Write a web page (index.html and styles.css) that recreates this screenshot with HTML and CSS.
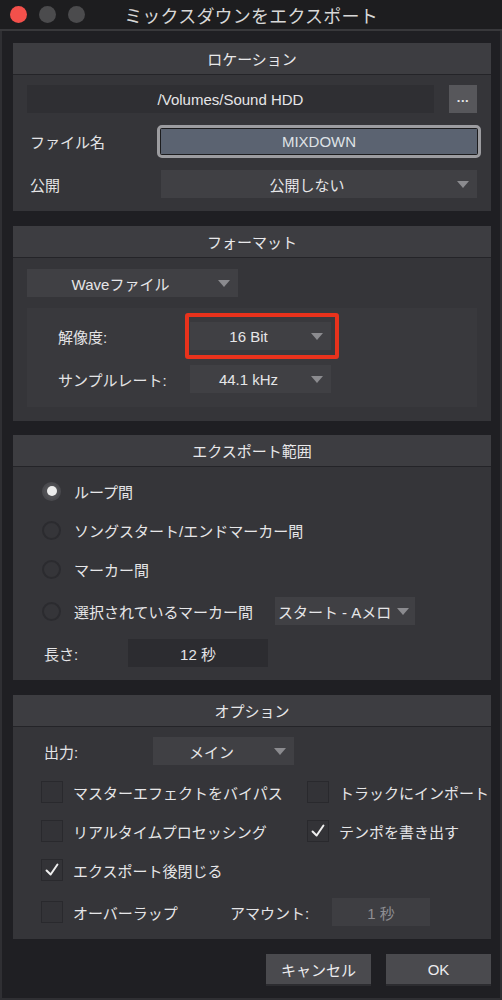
FILE: index.html
```html
<!DOCTYPE html>
<html lang="ja">
<head>
<meta charset="utf-8">
<title>ミックスダウンをエクスポート</title>
<link rel="stylesheet" href="styles.css">
</head>
<body>
<div class="titlebar">
  <div class="lights">
    <span class="light red"></span>
    <span class="light"></span>
    <span class="light"></span>
  </div>
  <div class="title">ミックスダウンをエクスポート</div>
  <div></div>
</div>
<div class="window">
  <section class="panel">
    <div class="panel-head">ロケーション</div>
    <div class="panel-body loc">
      <div class="row">
        <div class="path">/Volumes/Sound HDD</div>
        <div class="browse">...</div>
      </div>
      <div class="row">
        <div class="label loc-label">ファイル名</div>
        <div class="input"><div class="input-inner">MIXDOWN</div></div>
      </div>
      <div class="row">
        <div class="label loc-label">公開</div>
        <div class="dd grow"><span class="dd-text">公開しない</span><span class="arrow"></span></div>
      </div>
    </div>
  </section>

  <section class="panel">
    <div class="panel-head">フォーマット</div>
    <div class="panel-body fmt">
      <div class="dd wave"><span class="dd-text">Waveファイル</span><span class="arrow"></span></div>
      <div class="subpanel">
        <div class="row">
          <div class="label fmt-label">解像度:</div>
          <div class="hl">
            <div class="dd small"><span class="dd-text">16 Bit</span><span class="arrow"></span></div>
          </div>
        </div>
        <div class="row">
          <div class="label fmt-label">サンプルレート:</div>
          <div class="dd small"><span class="dd-text">44.1 kHz</span><span class="arrow"></span></div>
        </div>
      </div>
    </div>
  </section>

  <section class="panel">
    <div class="panel-head">エクスポート範囲</div>
    <div class="panel-body range">
      <div class="row"><span class="radio on"></span><span class="opt">ループ間</span></div>
      <div class="row"><span class="radio"></span><span class="opt">ソングスタート/エンドマーカー間</span></div>
      <div class="row"><span class="radio"></span><span class="opt">マーカー間</span></div>
      <div class="row more"><span class="radio"></span><span class="opt">選択されているマーカー間</span>
        <div class="dd marker"><span class="dd-text left">スタート - Aメロ</span><span class="arrow"></span></div>
      </div>
      <div class="row more len">
        <div class="label len-label">長さ:</div>
        <div class="field">12 秒</div>
      </div>
    </div>
  </section>

  <section class="panel">
    <div class="panel-head">オプション</div>
    <div class="panel-body opts">
      <div class="row out">
        <div class="label out-label">出力:</div>
        <div class="dd small"><span class="dd-text">メイン</span><span class="arrow"></span></div>
      </div>
      <div class="row first-check">
        <div class="check-item col1"><span class="cb"></span><span class="opt">マスターエフェクトをバイパス</span></div>
        <div class="check-item"><span class="cb"></span><span class="opt">トラックにインポート</span></div>
      </div>
      <div class="row">
        <div class="check-item col1"><span class="cb"></span><span class="opt">リアルタイムプロセッシング</span></div>
        <div class="check-item"><span class="cb"><svg viewBox="0 0 22 22"><polyline points="5,11.5 9.5,16 17,5" /></svg></span><span class="opt">テンポを書き出す</span></div>
      </div>
      <div class="row">
        <div class="check-item col1"><span class="cb"><svg viewBox="0 0 22 22"><polyline points="5,11.5 9.5,16 17,5" /></svg></span><span class="opt">エクスポート後閉じる</span></div>
      </div>
      <div class="row more">
        <div class="check-item overlap"><span class="cb"></span><span class="opt">オーバーラップ</span></div>
        <div class="label amt-label">アマウント:</div>
        <div class="field amount">1 秒</div>
      </div>
    </div>
  </section>

  <div class="buttons">
    <div class="btn">キャンセル</div>
    <div class="btn">OK</div>
  </div>
</div>
</body>
</html>
```
FILE: styles.css
```css
* { box-sizing: border-box; }
html, body { margin: 0; }
body {
  width: 502px;
  height: 1000px;
  overflow: hidden;
  background: #1f1f23;
  font: 15px "Liberation Sans", "Noto Sans CJK JP", sans-serif;
  color: #e6e6e8;
}
.titlebar {
  height: 31px;
  background: #1d1d1f;
  border-bottom: 2px solid #38383b;
  display: grid;
  grid-template-columns: 1fr auto 1fr;
  align-items: center;
}
.lights { display: flex; gap: 12px; padding-left: 10px; }
.light { width: 17px; height: 17px; border-radius: 50%; background: #4b4b4d; }
.light.red { background: #f3504b; }
.title { font-size: 18px; color: #d8d8d8; letter-spacing: 0.2px; }

.window {
  height: 969px;
  border: 2px solid #2f2f33;
  border-top: none;
  padding: 12px 9px 0 11px;
  display: flex;
  flex-direction: column;
}
.panel { background: #353539; margin-bottom: 15px; }
.panel:nth-of-type(2) { margin-bottom: 14px; }
.panel-head {
  height: 32px;
  background: #3d3d41;
  border-bottom: 1px solid #242428;
  display: flex;
  align-items: center;
  justify-content: center;
  color: #e8e8ea;
}
.row { display: flex; align-items: center; height: 28px; }
.label { flex: none; color: #e4e4e6; }

/* Location */
.loc { padding: 10px 14px 13px 14px; display: flex; flex-direction: column; gap: 12px; }
.loc .row:nth-child(2) { height: 33px; }
.path {
  width: 407px; height: 28px; background: #2f2f33;
  display: flex; align-items: center; justify-content: center;
}
.browse {
  width: 28px; height: 28px; margin-left: 15px; background: #57575b;
  display: flex; align-items: center; justify-content: center;
  font-weight: bold; font-size: 13px; padding-bottom: 3px; letter-spacing: 0.5px;
}
.loc-label { width: 134px; padding-left: 3px; }
.input {
  flex: 1; height: 33px; margin: 0 -4px;
  border: 3px solid #9c9ca0; border-radius: 5px; background: #1c1c1e; padding: 1px;
}
.input-inner {
  height: 100%; background: #5b6371; color: #dfe2e6;
  display: flex; align-items: center; justify-content: center;
}

/* Dropdown */
.dd {
  height: 28px; background: #404044;
  display: flex; align-items: center; padding-right: 8px;
}
.dd.grow { flex: 1; }
.dd-text { flex: 1; text-align: center; white-space: nowrap; }
.dd-text.left { text-align: left; padding-left: 3px; overflow: hidden; }
.arrow {
  flex: none; width: 0; height: 0; margin-left: 4px;
  border-left: 6px solid transparent; border-right: 6px solid transparent;
  border-top: 7px solid #8b8b8f;
}

/* Format */
.fmt { padding: 11px 14px 14px 14px; }
.wave { width: 211px; }
.subpanel {
  margin-top: 11px; background: #39393d;
  padding: 14px 0 14px 31px;
  display: flex; flex-direction: column; gap: 15px;
}
.fmt-label { width: 132px; }
.small { width: 141px; }
.hl { position: relative; }
.hl::after {
  content: ""; position: absolute;
  top: -9px; bottom: -9px; left: -5px; right: -8px;
  border: 4px solid #e8321c; border-radius: 3px;
}

/* Range */
.range { padding: 10px 14px 13px 29px; display: flex; flex-direction: column; gap: 11px; }
.row.more { margin-top: 3px; }
.radio {
  flex: none; width: 19px; height: 19px; border-radius: 50%;
  border: 2px solid #2b2b2f; margin-right: 13px;
  display: flex; align-items: center; justify-content: center;
}
.radio.on { background: #505054; border-color: #4a4a4e; }
.radio.on::after { content: ""; width: 10px; height: 10px; border-radius: 50%; background: #ececec; }
.opt { white-space: nowrap; }
.marker { width: 140px; margin-left: 22px; padding-right: 6px; }
.len { padding-left: 2px; }
.len-label { width: 84px; }
.field {
  width: 140px; height: 28px; background: #2c2c30;
  display: flex; align-items: center; justify-content: center;
}

/* Options */
.opts { padding: 10px 0 13px 28px; display: flex; flex-direction: column; gap: 11px; }
.out { padding-left: 3px; }
.out-label { width: 109px; }
.row.first-check { margin-top: 2px; }
.check-item { display: flex; align-items: center; }
.col1 { width: 266px; }
.overlap { width: 189px; }
.cb {
  flex: none; width: 22px; height: 22px; margin-right: 10px;
  border: 1px solid #29292d; background: #333337;
}
.cb svg { display: block; width: 20px; height: 20px; }
.cb polyline { fill: none; stroke: #efefef; stroke-width: 2.2; stroke-linecap: round; stroke-linejoin: round; }
.amt-label { width: 102px; }
.field.amount { width: 98px; background: #3e3e42; color: #8e8e92; }

/* Buttons */
.buttons { display: flex; justify-content: flex-end; gap: 15px; margin-top: 0; }
.btn {
  width: 105px; height: 32px; background: #4a4a4e;
  border-bottom: 2px solid #2c2c30;
  display: flex; align-items: center; justify-content: center;
  color: #ececee;
}
```
